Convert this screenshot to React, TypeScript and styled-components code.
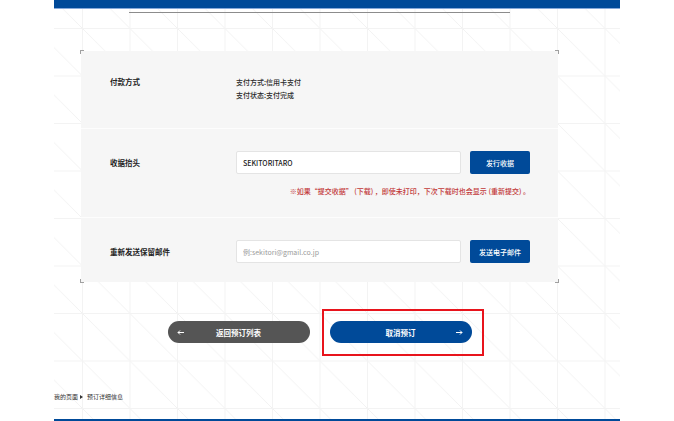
import React from 'react';
import styled, { createGlobalStyle } from 'styled-components';

const GlobalStyle = createGlobalStyle`
  html, body {
    margin: 0;
    padding: 0;
    background: #fff;
  }
  body {
    font-family: "Noto Sans CJK SC", "Noto Sans", sans-serif;
    color: #222;
  }
  * {
    box-sizing: border-box;
  }
`;

const BLUE = '#004a99';

const Viewport = styled.div`
  width: 674px;
  height: 421px;
  overflow: hidden;
`;

// faint triangle grid behind the whole content column
const Frame = styled.div`
  margin-left: 54px;
  width: 566px;
  height: 421px;
  display: flex;
  flex-direction: column;
  background-color: #fff;
  background-image:
    linear-gradient(to right, #f3f3f3 1px, transparent 1px),
    linear-gradient(to bottom, #f3f3f3 1px, transparent 1px),
    linear-gradient(45deg, transparent calc(50% - 0.6px), #f2f2f2 50%, transparent calc(50% + 0.6px));
  background-size: 47.5px 47.5px;
  background-position: 28px 28px;
`;

const TopBar = styled.div`
  height: 9px;
  background: ${BLUE};
  border-bottom: 1px solid #86a9da;
`;

const Rule = styled.div`
  margin: 3px 0 0 75px;
  width: 381px;
  height: 1px;
  background: #8c8c8c;
`;

const Main = styled.div`
  margin: 38px 0 0 27px;
  width: 477px;
`;

const Card = styled.div`
  position: relative;
  background: #f6f6f6;
`;

type Corner = 'tl' | 'tr' | 'bl' | 'br';

const CornerMark = styled.span<{ $at: Corner }>`
  position: absolute;
  width: 4px;
  height: 4px;
  border: 0 solid #a0a0a0;
  ${({ $at }) => ($at[0] === 't' ? 'top: -1px; border-top-width: 1px;' : 'bottom: -1px; border-bottom-width: 1px;')}
  ${({ $at }) => ($at[1] === 'l' ? 'left: -1px; border-left-width: 1px;' : 'right: -1px; border-right-width: 1px;')}
`;

const Row = styled.div<{ $top: number; $bottom: number; $divider?: boolean }>`
  display: grid;
  grid-template-columns: 126px 1fr;
  padding: ${({ $top, $bottom }) => `${$top}px 28px ${$bottom}px 29px`};
  border-top: ${({ $divider }) => ($divider ? '1px solid #fdfdfd' : 'none')};
`;

const Label = styled.div<{ $lh: number }>`
  font-size: 7.5px;
  font-weight: 700;
  line-height: ${({ $lh }) => $lh}px;
  color: #222;
`;

const Values = styled.div`
  font-size: 7px;
  font-weight: 500;
  line-height: 12.5px;
  color: #2a2a2a;
`;

const Field = styled.div`
  display: flex;
  gap: 9px;
`;

const TextInput = styled.input`
  width: 225px;
  height: 23px;
  padding: 0 6px;
  border: 1px solid #e4e4e4;
  border-radius: 2px;
  background: #fff;
  font-family: inherit;
  font-size: 7px;
  font-weight: 500;
  color: #222;
  outline: none;

  &::placeholder {
    color: #9a9a9a;
    font-weight: 400;
  }
`;

const SmallButton = styled.button`
  width: 60px;
  height: 23px;
  border: none;
  border-radius: 2px;
  background: ${BLUE};
  color: #fff;
  font-family: inherit;
  font-size: 7px;
  font-weight: 500;
  padding: 0;
`;

const Note = styled.div`
  grid-column: 2;
  margin-top: 11px;
  font-size: 7px;
  font-weight: 500;
  line-height: 12px;
  text-align: right;
  color: #c23838;
  white-space: nowrap;
`;

const Actions = styled.div`
  display: flex;
  justify-content: center;
  gap: 20px;
  margin-top: 39px;
`;

const Pill = styled.button<{ $tone: 'gray' | 'blue' }>`
  position: relative;
  width: 142px;
  height: 22px;
  display: grid;
  grid-template-columns: 26px 1fr 26px;
  align-items: center;
  padding: 0;
  border: none;
  border-radius: 11px;
  background: ${({ $tone }) => ($tone === 'gray' ? '#555555' : BLUE)};
  color: #fff;
  font-family: inherit;
  font-size: 7.5px;
  font-weight: 700;
`;

const ArrowSlot = styled.span<{ $side: 'left' | 'right' }>`
  display: flex;
  justify-content: ${({ $side }) => ($side === 'left' ? 'flex-start' : 'flex-end')};
  padding: 0 9px;
`;

const Highlight = styled.span`
  position: absolute;
  top: -12px;
  bottom: -13px;
  left: -8px;
  right: -12px;
  border: 2px solid #e8141c;
  pointer-events: none;
`;

const Breadcrumb = styled.div`
  display: flex;
  align-items: center;
  margin-top: 49px;
  font-size: 6px;
  line-height: 10px;
  color: #333;
`;

const Caret = styled.span`
  width: 0;
  height: 0;
  margin: 0 4px 0 2px;
  border-top: 2px solid transparent;
  border-bottom: 2px solid transparent;
  border-left: 3px solid #333;
`;

const BottomBar = styled.div`
  margin-top: auto;
  height: 2px;
  background: ${BLUE};
`;

const Arrow = ({ dir }: { dir: 'left' | 'right' }) => (
  <svg width="7" height="5" viewBox="0 0 7 5" fill="none" stroke="#fff" strokeWidth="1">
    {dir === 'left' ? (
      <path d="M7 2.5H1M3 0.5L1 2.5L3 4.5" />
    ) : (
      <path d="M0 2.5H6M4 0.5L6 2.5L4 4.5" />
    )}
  </svg>
);

export default function App() {
  return (
    <>
      <GlobalStyle />
      <Viewport>
        <Frame>
          <TopBar />
          <Rule />
          <Main>
            <Card>
              <CornerMark $at="tl" />
              <CornerMark $at="tr" />
              <CornerMark $at="bl" />
              <CornerMark $at="br" />

              <Row $top={25} $bottom={27}>
                <Label $lh={12.5}>付款方式</Label>
                <Values>
                  <div>支付方式:信用卡支付</div>
                  <div>支付状态:支付完成</div>
                </Values>
              </Row>

              <Row $top={22} $bottom={20} $divider>
                <Label $lh={23}>收据抬头</Label>
                <Field>
                  <TextInput readOnly value="SEKITORITARO" />
                  <SmallButton>发行收据</SmallButton>
                </Field>
                <Note>※如果“提交收据” (下载) ，即使未打印，下次下载时也会显示 (重新提交) 。</Note>
              </Row>

              <Row $top={22} $bottom={19} $divider>
                <Label $lh={23}>重新发送保留邮件</Label>
                <Field>
                  <TextInput placeholder="例:sekitori@gmail.co.jp" />
                  <SmallButton>发送电子邮件</SmallButton>
                </Field>
              </Row>
            </Card>

            <Actions>
              <Pill $tone="gray">
                <ArrowSlot $side="left">
                  <Arrow dir="left" />
                </ArrowSlot>
                <span>返回预订列表</span>
                <span />
              </Pill>
              <Pill $tone="blue">
                <span />
                <span>取消预订</span>
                <ArrowSlot $side="right">
                  <Arrow dir="right" />
                </ArrowSlot>
                <Highlight />
              </Pill>
            </Actions>
          </Main>

          <Breadcrumb>
            <span>我的页面</span>
            <Caret />
            <span>预订详细信息</span>
          </Breadcrumb>
          <BottomBar />
        </Frame>
      </Viewport>
    </>
  );
}
